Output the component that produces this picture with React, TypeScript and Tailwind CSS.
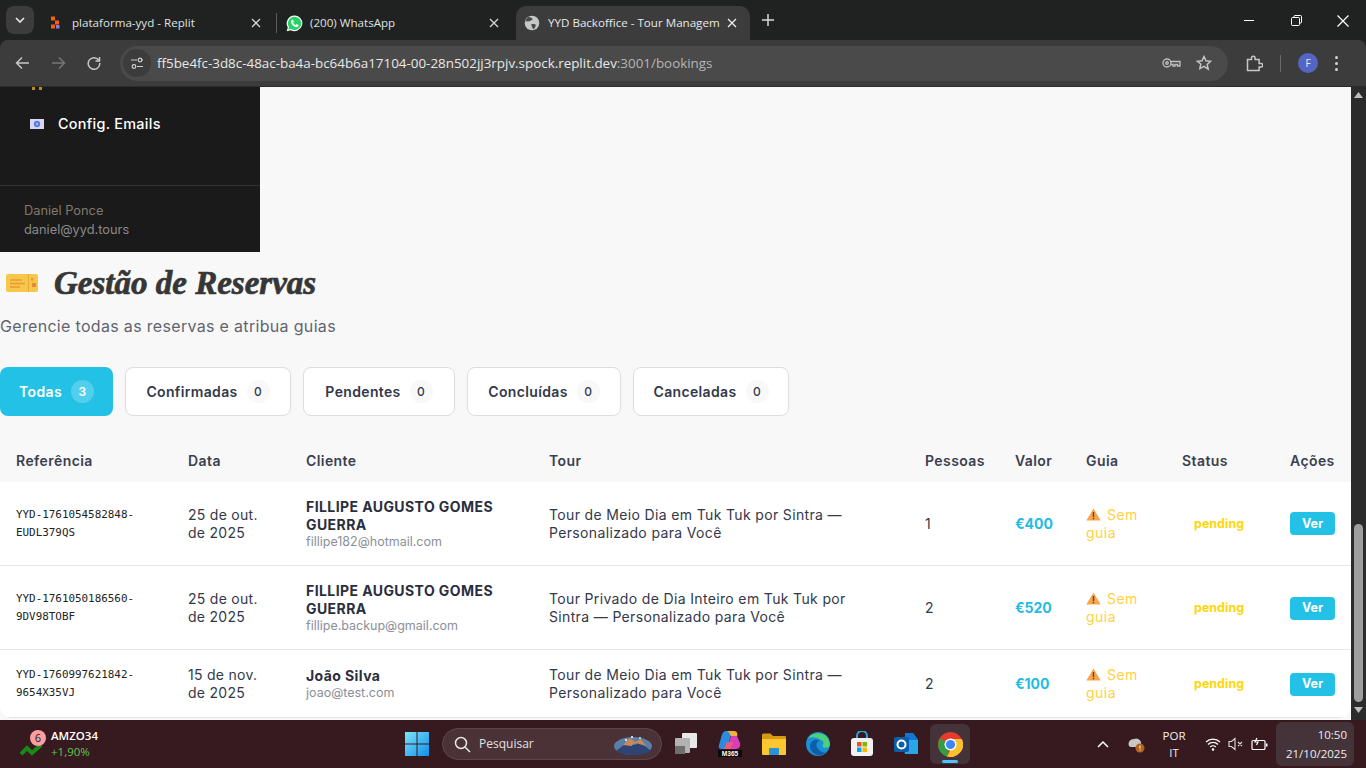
import React from "react";

const ui = "font-['Open_Sans','Noto_Sans',sans-serif]";
const mont = "font-['Inter','Noto_Sans',sans-serif]";

function Close({ c = "#d5d5d5" }: { c?: string }) {
  return (
    <svg width="10" height="10" viewBox="0 0 10 10" fill="none" stroke={c} strokeWidth="1.3"><path d="M1 1l8 8M9 1l-8 8" /></svg>
  );
}

function ReplitIcon() {
  return (
    <svg width="12" height="14" viewBox="0 0 12 14">
      <rect x="1" y="0.5" width="4" height="4" fill="#f26207" />
      <rect x="5" y="4.5" width="4" height="4" fill="#f26207" />
      <rect x="1" y="8.5" width="4" height="4" fill="#f26207" />
      <rect x="6" y="9" width="3.5" height="3.5" fill="#8b7cf6" />
    </svg>
  );
}

function WhatsIcon() {
  return (
    <svg width="17" height="17" viewBox="0 0 17 17">
      <path d="M8.5.6a7.8 7.8 0 0 0-6.7 11.8L.7 16.3l4-1.1A7.8 7.8 0 1 0 8.500.6z" fill="#fff" />
      <path d="M8.500 1.800a6.600 6.600 0 0 0-5.500 10.200l-.7 2.600 2.700-.7a6.600 6.600 0 1 0 3.500-12.100z" fill="#25d366" />
      <path d="M6.300 4.800c-.5 0-1.300.8-1.300 2 0 2.400 3 5.400 5.500 5.400 1.200 0 2-.9 2-1.500v-.8l-1.900-.9-.8 1c-1-.3-2.300-1.500-2.700-2.600l.8-.8-.8-1.800z" fill="#fff" />
    </svg>
  );
}

function Globe() {
  return (
    <svg width="16" height="16" viewBox="0 0 16 16">
      <circle cx="8" cy="8" r="7.300" fill="#c4c7c5" />
      <path d="M5 1.800c1 1 3 .8 3.500 2 .4 1-1.300 1.300-2.200 2.200-.7.700-2.500-.3-4.800.700C2 4 3 2.700 5 1.800zM8 9c1.500-.3 3.500 0 3.800 1 .3 1.200-1.300 3.700-2.500 4-1 .2-.8-1.800-1.500-2.800C7.200 10.300 7 9.300 8 9z" fill="#47494b" />
    </svg>
  );
}

function TabStrip() {
  return (
    <div className={`h-[40px] bg-[#202221] flex items-start ${ui} text-[11.6px] text-[#dfe1e0] relative`}>
      <div className="ml-[6px] mt-[6px] w-[28px] h-[28px] rounded-[8px] bg-[#3c3c3c] flex items-center justify-center">
        <svg width="10" height="6" viewBox="0 0 10 6" fill="none" stroke="#e3e3e3" strokeWidth="1.700"><path d="M1 1l4 4 4-4" /></svg>
      </div>
      <div className="ml-[12px] w-[230px] h-[34px] mt-[6px] flex items-center pl-[2px] pr-[15px]">
        <div className="w-[16px] flex justify-center"><ReplitIcon /></div>
        <span className="ml-[8px] flex-1 whitespace-nowrap">plataforma-yyd - Replit</span>
        <Close />
      </div>
      <div className="w-px h-[20px] bg-[#5a5a5a] mt-[13px]" />
      <div className="w-[239px] h-[34px] mt-[6px] flex items-center pl-[9px] pr-[17px]">
        <WhatsIcon />
        <span className="ml-[7px] flex-1 whitespace-nowrap">(200) WhatsApp</span>
        <Close />
      </div>
      <div className="w-[234px] h-[34px] mt-[6px] rounded-t-[10px] bg-[#3c3c3c] flex items-center pl-[8px] pr-[13px] text-[#e8e8e8]">
        <Globe />
        <span className="ml-[8px] flex-1 whitespace-nowrap">YYD Backoffice - Tour Managem</span>
        <Close c="#eee" />
      </div>
      <div className="ml-[12px] mt-[14px]">
        <svg width="12" height="12" viewBox="0 0 12 12" stroke="#d8d8d8" strokeWidth="1.500"><path d="M6 0v12M0 6h12" /></svg>
      </div>
      <div className="ml-auto flex items-start mr-[17px] mt-[15px]">
        <svg width="10" height="10" viewBox="0 0 10 10" stroke="#fff"><path d="M0 5.500h10" /></svg>
        <svg className="ml-[37px]" width="11" height="11" viewBox="0 0 11 11" fill="none" stroke="#fff"><rect x=".5" y="2.500" width="8" height="8" rx="1" /><path d="M3 2.500V1.500a1 1 0 0 1 1-1h5.500a1 1 0 0 1 1 1V7a1 1 0 0 1-1 1H8.500" /></svg>
        <svg className="ml-[35px]" width="12" height="12" viewBox="0 0 12 12" stroke="#fff" strokeWidth="1.200"><path d="M.5.500l11 11M11.500.500l-11 11" /></svg>
      </div>
    </div>
  );
}

function Toolbar() {
  return (
    <div className="h-[47px] bg-[#202221]">
      <div className="h-[46px] bg-[#3c3c3c] rounded-t-[8px] flex items-center border-b border-[#2c2c2c] box-content">
        <div className="ml-[15px] w-[15px]">
          <svg width="15" height="14" viewBox="0 0 15 14" fill="none" stroke="#c7c7c7" strokeWidth="1.500"><path d="M14 7H2M7 1.500L1.500 7 7 12.500" /></svg>
        </div>
        <div className="ml-[21px] w-[15px]">
          <svg width="15" height="14" viewBox="0 0 15 14" fill="none" stroke="#777" strokeWidth="1.500"><path d="M1 7h12M8 1.500L13.500 7 8 12.500" /></svg>
        </div>
        <div className="ml-[21px] w-[14px]">
          <svg width="14" height="14" viewBox="0 0 14 14" fill="none" stroke="#c7c7c7" strokeWidth="1.500"><path d="M12 4.500A5.800 5.800 0 1 0 12.800 7" /><path d="M12.500 1v4h-4" /></svg>
        </div>
        <div className="ml-[19px] w-[1108px] h-[35px] rounded-full bg-[#4a4a4a] flex items-center pl-[3px] pr-[16px]">
          <div className="w-[28px] h-[28px] rounded-full bg-[#3c3c3c] flex items-center justify-center">
            <svg width="14" height="14" viewBox="0 0 14 14" fill="none" stroke="#d0d0d0" strokeWidth="1.200"><path d="M1 4h6M7 10.500h6" /><circle cx="10" cy="4" r="1.800" /><circle cx="4" cy="10.500" r="1.800" /><path d="M12 4h1" /></svg>
          </div>
          <span className={`ml-[6px] ${ui} text-[13.4px] text-[#e8e8e8] whitespace-nowrap flex-1`}>
            ff5be4fc-3d8c-48ac-ba4a-bc64b6a17104-00-28n502jj3rpjv.spock.replit.dev<span className="text-[#b5b5b5]">:3001/bookings</span>
          </span>
          <svg width="19" height="12" viewBox="0 0 19 12" fill="none" stroke="#bdbdbd" strokeWidth="1.400"><circle cx="5" cy="6" r="4" /><circle cx="5" cy="6" r="1.200" /><path d="M9 4.500h9V9h-2.500V7.500H13V9h-2V7.500H9" /></svg>
          <svg className="ml-[15px]" width="16" height="16" viewBox="0 0 16 16" fill="none" stroke="#c7c7c7" strokeWidth="1.400"><path d="M8 1.500l2 4.300 4.700.5-3.500 3.200 1 4.700L8 11.300l-4.200 2.400 1-4.700L1.300 6.300 6 5.800z" /></svg>
        </div>
        <svg className="ml-[18px]" width="17" height="17" viewBox="0 0 17 17" fill="none" stroke="#c7c7c7" strokeWidth="1.500"><path d="M1.500 4.500h4V3a1.800 1.800 0 0 1 3.600 0v1.500h4v4H15a1.800 1.800 0 0 1 0 3.600h-1.900v3.400H1.500z" /></svg>
        <div className="ml-[17px] w-px h-[17px] bg-[#6a6a6a]" />
        <div className={`ml-[17px] w-[20px] h-[20px] rounded-full bg-[#5565c5] flex items-center justify-center text-[10px] text-[#e8ecff] ${ui}`}>F</div>
        <div className="ml-[17px] flex flex-col gap-[3px]">
          <div className="w-[3px] h-[3px] rounded-full bg-[#d5d5d5]" />
          <div className="w-[3px] h-[3px] rounded-full bg-[#d5d5d5]" />
          <div className="w-[3px] h-[3px] rounded-full bg-[#d5d5d5]" />
        </div>
      </div>
    </div>
  );
}

function Sidebar() {
  return (
    <aside className={`w-[260px] h-[165px] bg-[#1a1a1a] flex flex-col ${mont} shrink-0`}>
      <div className="h-[98px] relative">
        <div className="absolute left-[32px] top-0 w-[10px] h-[3px] flex justify-between">
          <span className="w-[3px] h-[3px] bg-[#c08a1e]" />
          <span className="w-[3px] h-[3px] bg-[#c08a1e]" />
        </div>
        <div className="pl-[30px] pt-[28px] flex items-center">
          <svg width="14" height="10" viewBox="0 0 14 10"><rect width="14" height="10" fill="#d8d8f4" /><circle cx="7" cy="5" r="3.200" fill="#5b7fd8" /><circle cx="7" cy="5" r="1.200" fill="#9db4ee" /></svg>
          <span className="ml-[14px] text-[14.4px] text-white font-medium leading-[18px] tracking-[0.02em]">Config. Emails</span>
        </div>
      </div>
      <div className="border-t border-[#333333] pl-[24px] pt-[15px] text-[12.8px] text-[#8a8a8a] leading-[19px]">
        <div className="text-[#80796c]">Daniel Ponce</div>
        <div>daniel@yyd.tours</div>
      </div>
    </aside>
  );
}

const tabs = [
  { label: "Todas", n: 3, w: "w-[113px]", active: true },
  { label: "Confirmadas", n: 0, w: "w-[166px]", active: false },
  { label: "Pendentes", n: 0, w: "w-[152px]", active: false },
  { label: "Concluídas", n: 0, w: "w-[154px]", active: false },
  { label: "Canceladas", n: 0, w: "w-[156px]", active: false },
];

function Tabs() {
  return (
    <div className="mt-[31px] flex gap-[12px]">
      {tabs.map((t) => (
        <div
          key={t.label}
          className={`${t.w} h-[49px] rounded-[8px] flex items-center justify-center gap-[9px] text-[14px] font-semibold tracking-[0.025em] ${
            t.active ? "bg-[#23c1e6] text-white" : "bg-white border border-[#dcdce2] text-[#33384a]"
          }`}
        >
          <span>{t.label}</span>
          <span
            className={`w-[23px] h-[23px] rounded-full flex items-center justify-center text-[12px] ${
              t.active ? "bg-[#52cfec] text-white" : "bg-[#f8f8f8] text-[#33384a] font-medium"
            }`}
          >
            {t.n}
          </span>
        </div>
      ))}
    </div>
  );
}

function Warn() {
  return (
    <svg className="inline-block align-[-1px] mr-[6px]" width="15" height="13" viewBox="0 0 15 13">
      <path d="M7.500.5L14.700 12.500H.3z" fill="#f9a64a" />
      <rect x="6.800" y="4" width="1.400" height="5" fill="#5a4630" />
      <rect x="6.800" y="9.800" width="1.400" height="1.500" fill="#5a4630" />
    </svg>
  );
}

const rows = [
  { ref1: "YYD-1761054582848-", ref2: "EUDL379QS", d1: "25 de out.", d2: "de 2025", name: ["FILLIPE AUGUSTO GOMES", "GUERRA"], email: "fillipe182@hotmail.com", t1: "Tour de Meio Dia em Tuk Tuk por Sintra —", t2: "Personalizado para Você", p: 1, v: "€400", h: "h-[83px]", pt: "pt-[1px]" },
  { ref1: "YYD-1761050186560-", ref2: "9DV98TOBF", d1: "25 de out.", d2: "de 2025", name: ["FILLIPE AUGUSTO GOMES", "GUERRA"], email: "fillipe.backup@gmail.com", t1: "Tour Privado de Dia Inteiro em Tuk Tuk por", t2: "Sintra — Personalizado para Você", p: 2, v: "€520", h: "h-[84px]", pt: "pt-[2px]" },
  { ref1: "YYD-1760997621842-", ref2: "9654X35VJ", d1: "15 de nov.", d2: "de 2025", name: ["João Silva"], email: "joao@test.com", t1: "Tour de Meio Dia em Tuk Tuk por Sintra —", t2: "Personalizado para Você", p: 2, v: "€100", h: "h-[68px]", pt: "pt-[2px]" },
];

const th = "text-left font-semibold text-[14px] text-[#3a3f50] pl-[16px] pr-0 tracking-[0.03em]";
const td = "pl-[16px] pr-0 align-middle leading-[18px]";

function BookingsTable() {
  return (
    <div className="mt-[23px] rounded-b-[12px] overflow-hidden">
      <table className="w-[1351px] table-fixed border-collapse">
        <colgroup>
          <col className="w-[172px]" />
          <col className="w-[118px]" />
          <col className="w-[243px]" />
          <col className="w-[376px]" />
          <col className="w-[90px]" />
          <col className="w-[71px]" />
          <col className="w-[96px]" />
          <col className="w-[108px]" />
          <col className="w-[77px]" />
        </colgroup>
        <thead>
          <tr className="h-[43px]">
            {["Referência", "Data", "Cliente", "Tour", "Pessoas", "Valor", "Guia", "Status", "Ações"].map((h) => (
              <th key={h} className={th}>{h}</th>
            ))}
          </tr>
        </thead>
        <tbody className="bg-white">
          {rows.map((r) => (
            <tr key={r.ref1} className={`${r.h} border-b border-[#e6e6e6]`}>
              <td className={`${td} ${r.pt} font-['DejaVu_Sans_Mono','Liberation_Mono',monospace] text-[10.9px] text-[#222]`}>
                <div>{r.ref1}</div>
                <div>{r.ref2}</div>
              </td>
              <td className={`${td} ${r.pt} text-[14px] text-[#33384a] tracking-[0.02em]`}>
                <div>{r.d1}</div>
                <div>{r.d2}</div>
              </td>
              <td className={`${td} ${r.pt}`}>
                {r.name.map((n) => (
                  <div key={n} className="font-bold text-[14px] text-[#2a2e3d] tracking-[0.03em] whitespace-nowrap">{n}</div>
                ))}
                <div className="text-[12.5px] text-[#8b8f99] leading-[16px]">{r.email}</div>
              </td>
              <td className={`${td} ${r.pt} text-[14px] text-[#33384a] tracking-[0.025em] whitespace-nowrap`}>
                <div>{r.t1}</div>
                <div>{r.t2}</div>
              </td>
              <td className={`${td} ${r.pt} text-[14px] text-[#33384a]`}>{r.p}</td>
              <td className={`${td} ${r.pt} font-bold text-[#23bce3] text-[14px]`}>{r.v}</td>
              <td className={`${td} ${r.pt} text-[14px] text-[#ffd23f] tracking-[0.035em]`}>
                <div className="whitespace-nowrap"><Warn />Sem</div>
                <div>guia</div>
              </td>
              <td className={`${td} ${r.pt}`}>
                <div className="ml-[12px] text-[12.5px] font-bold text-[#ffd60a]">pending</div>
              </td>
              <td className={`${td} ${r.pt}`}>
                <div className="w-[45px] h-[23px] rounded-[4px] bg-[#23c1e6] flex items-center justify-center text-[12.5px] font-bold text-white">Ver</div>
              </td>
            </tr>
          ))}
        </tbody>
      </table>
    </div>
  );
}

function Scrollbar() {
  return (
    <div className="w-[15px] h-full bg-[#2b2b2b] shrink-0 flex flex-col items-center relative">
      <svg className="mt-[5px]" width="9" height="6" viewBox="0 0 9 6" fill="#bdbdbd"><path d="M4.500 0L9 6H0z" /></svg>
      <div className="mt-[426px] w-[9px] h-[178px] rounded-full bg-[#9e9e9e]" />
      <svg className="mt-[5px]" width="9" height="6" viewBox="0 0 9 6" fill="#bdbdbd"><path d="M4.500 6L9 0H0z" /></svg>
    </div>
  );
}

function Pin({ children }: { children: React.ReactNode }) {
  return <div className="w-[44px] flex items-center justify-center">{children}</div>;
}

function Taskbar() {
  return (
    <div className={`h-[48px] bg-[#361a20] flex items-center ${ui} text-white relative shrink-0`}>
      <div className="w-[405px] flex items-center pl-[20px]">
        <div className="relative w-[26px] h-[28px]">
          <svg className="absolute left-0 top-[12px]" width="24" height="15" viewBox="0 0 24 15" fill="none" stroke="#178a17" strokeWidth="4"><path d="M1 12l6-6 5 5 9-8" /></svg>
          <div className="absolute left-[10px] top-0 w-[16px] h-[16px] rounded-full bg-[#ff9ea0] text-[#222] text-[11px] flex items-center justify-center">6</div>
        </div>
        <div className="ml-[5px] leading-[16px]">
          <div className="text-[11.5px] font-semibold">AMZO34</div>
          <div className="text-[11.5px] text-[#5fc44f]">+1,90%</div>
        </div>
      </div>
      <svg width="24" height="24" viewBox="0 0 24 24">
        <defs><linearGradient id="win" x1="0" y1="0" x2="1" y2="1"><stop offset="0" stopColor="#7de3fb" /><stop offset="1" stopColor="#0f8fe8" /></linearGradient></defs>
        <path d="M0 0h11.500v11.500H0zM12.500 0H24v11.500H12.500zM0 12.500h11.500V24H0zM12.500 12.500H24V24H12.500z" fill="url(#win)" />
      </svg>
      <div className="ml-[13px] w-[220px] h-[32px] rounded-full bg-[#4a3236] border border-[#5c484b] flex items-center pl-[11px] pr-[8px]">
        <svg width="17" height="17" viewBox="0 0 17 17" fill="none" stroke="#e6e6e6" strokeWidth="1.500"><circle cx="7" cy="7" r="5.500" /><path d="M11 11l5 5" /></svg>
        <span className="ml-[8px] text-[12px] text-[#e4e0e0] flex-1">Pesquisar</span>
        <svg width="40" height="22" viewBox="0 0 40 22">
          <ellipse cx="20" cy="13" rx="19" ry="9" fill="#5c7fa8" />
          <path d="M3 18l13-10 6 4 5-3 11 9a20 8 0 0 1-35 0z" fill="#2e4474" />
          <path d="M10 12l7-7 5 4 6-3 5 7-10-3-5 3z" fill="#c98a5a" />
          <circle cx="19" cy="4" r="1" fill="#fff" /><circle cx="27" cy="5" r="1" fill="#9fe" /><circle cx="13" cy="7" r="1" fill="#fff" />
        </svg>
      </div>
      {/* pinned */}
      <div className="ml-[2px] flex items-center">
        <Pin>
          <svg width="24" height="24" viewBox="0 0 24 24">
            <rect x="8" y="1" width="15" height="15" rx="1" fill="#e8e8e8" />
            <rect x="1" y="6" width="15" height="15" rx="1" fill="#b3b3b3" />
            <rect x="1" y="14" width="10" height="8" fill="#6e6e6e" />
          </svg>
        </Pin>
        <Pin>
          <svg width="24" height="28" viewBox="0 0 24 28">
            <path d="M8 1C5 1 4 4 3 8L1 15c-1 3 1 4 3 4h5l4-14c.5-2 1-4-5-4z" fill="#2b8be0" />
            <path d="M8 1h8c3 0 4 3 3 5l-6 0c-2-4-3-5-5-5z" fill="#f4b03f" />
            <path d="M13 6l6 0 3 7c1 3-1 6-4 6h-9z" fill="#d83fb6" />
            <path d="M9 12h6l-2 7H6z" fill="#f05a7a" />
            <rect x="0" y="20" width="24" height="7" fill="#0a0a0a" />
            <text x="12" y="26" textAnchor="middle" fontSize="6.500" fill="#fff" fontFamily="Liberation Sans" fontWeight="700">M365</text>
          </svg>
        </Pin>
        <Pin>
          <svg width="26" height="24" viewBox="0 0 26 24">
            <path d="M1 3a1.500 1.500 0 0 1 1.500-1.500h7L12 4h12a1 1 0 0 1 1 1v3H1z" fill="#d99a13" />
            <path d="M1 7h24v15a1 1 0 0 1-1 1H2a1 1 0 0 1-1-1z" fill="#fbc630" />
            <rect x="8" y="16" width="10" height="7" rx="1" fill="#2b91d8" />
          </svg>
        </Pin>
        <Pin>
          <svg width="24" height="26" viewBox="0 0 24 26">
            <circle cx="12" cy="13" r="12" fill="#1a8fd6" />
            <path d="M2 8C5 0 22-1 24 13c.2 3-3 4.500-6 3.500-4-1.500 2-4-2-7C11 6 4 5 2 8z" fill="#4dd07a" />
            <path d="M4 15c0-5 6-8 10-5-5 0-5 8 2 11 1.500.6 3 .6 4 .3C13 28 4 22 4 15z" fill="#0f5da8" />
          </svg>
        </Pin>
        <Pin>
          <svg width="26" height="26" viewBox="0 0 26 26">
            <path d="M8 8V5a5 5 0 0 1 10 0v3" fill="none" stroke="#27a8e0" strokeWidth="2" />
            <rect x="2" y="7" width="22" height="18" rx="3" fill="#f2f2f2" />
            <rect x="8" y="11" width="4.500" height="4.500" fill="#f25022" />
            <rect x="13.500" y="11" width="4.500" height="4.500" fill="#7fba00" />
            <rect x="8" y="16.500" width="4.500" height="4.500" fill="#00a4ef" />
            <rect x="13.500" y="16.500" width="4.500" height="4.500" fill="#ffb900" />
          </svg>
        </Pin>
        <Pin>
          <svg width="26" height="26" viewBox="0 0 26 26">
            <path d="M9 7l11-5 5 7v14H12z" fill="#28a8ea" />
            <path d="M12 2h8l5 7H12z" fill="#0f78d4" />
            <rect x="1" y="6" width="15" height="15" rx="2" fill="#0a5ea8" />
            <circle cx="8.500" cy="13.500" r="4" fill="none" stroke="#fff" strokeWidth="2" />
          </svg>
        </Pin>
        <Pin>
          <div className="w-[40px] h-[40px] rounded-[6px] bg-[#45333a] flex flex-col items-center justify-center relative">
            <svg width="25" height="25" viewBox="0 0 25 25">
              <circle cx="12.500" cy="12.500" r="12.500" fill="#e53b2f" />
              <path d="M12.500 12.500L1.800 6.500A12.500 12.500 0 0 0 9 24.500z" fill="#2f9e44" />
              <path d="M12.500 7h11.300A12.500 12.500 0 0 1 9 24.500L14 15z" fill="#fbc02d" />
              <circle cx="12.500" cy="12.500" r="6" fill="#fff" />
              <circle cx="12.500" cy="12.500" r="4.600" fill="#3f86f4" />
            </svg>
            <div className="absolute bottom-[1px] w-[16px] h-[3px] rounded-full bg-[#4cc2ff]" />
          </div>
        </Pin>
      </div>
      {/* tray */}
      <div className="ml-auto flex items-center">
        <svg width="12" height="8" viewBox="0 0 12 8" fill="none" stroke="#fff" strokeWidth="1.500"><path d="M1 7l5-5 5 5" /></svg>
        <svg className="ml-[19px]" width="18" height="18" viewBox="0 0 18 18">
          <path d="M1 11a5 5 0 0 1 5-7 5 5 0 0 1 7 3v5H4a3 3 0 0 1-3-1z" fill="#c8c8c8" />
          <circle cx="12" cy="13" r="4.500" fill="#b0631a" />
          <rect x="11.500" y="10.500" width="1" height="3" fill="#fff" /><rect x="11.500" y="14.500" width="1" height="1" fill="#fff" />
        </svg>
        <div className="ml-[15px] w-[26px] text-center text-[11.5px] leading-[17px] text-[#eee]">POR<br />IT</div>
        <svg className="ml-[18px]" width="16" height="14" viewBox="0 0 16 14" fill="none" stroke="#fff" strokeWidth="1.200"><path d="M1 5a10 10 0 0 1 14 0M3 7.500a7 7 0 0 1 10 0M5.200 10a4 4 0 0 1 5.600 0" /><circle cx="8" cy="12.500" r=".7" fill="#fff" /></svg>
        <svg className="ml-[7px]" width="16" height="14" viewBox="0 0 16 14" fill="none" stroke="#ddd" strokeWidth="1.100"><path d="M1 4.500h2.500L7 1.500v11L3.500 9.500H1zM10 5l4 4M14 5l-4 4" /></svg>
        <svg className="ml-[7px]" width="17" height="14" viewBox="0 0 17 14" fill="none" stroke="#fff" strokeWidth="1.200"><rect x="1" y="3.500" width="13" height="9" rx="1" /><rect x="15" y="6.500" width="1.500" height="3" fill="#fff" stroke="none" /><path d="M6 1L4 5h3L5.500 8" /></svg>
        <div className="ml-[8px] mr-[12px] w-[78px] h-[44px] rounded-[6px] bg-[#45333a] flex flex-col justify-center items-end pr-[7px] text-[11.5px] leading-[19px] text-[#eee]">
          <div>10:50</div>
          <div>21/10/2025</div>
        </div>
      </div>
    </div>
  );
}

export default function App() {
  return (
    <div className="w-[1366px] h-[768px] overflow-hidden flex flex-col bg-[#f8f8f8]">
      <TabStrip />
      <Toolbar />
      <div className="h-[633px] flex overflow-hidden shrink-0">
        <main className={`flex-1 min-w-0 ${mont} bg-[#f8f8f8]`}>
          <Sidebar />
          <div className="h-[60px] flex items-end pl-[6px]">
            <svg className="mb-[20px]" width="32" height="18" viewBox="0 0 32 18">
              <rect width="32" height="18" rx="2" fill="#f7c64a" />
              <rect x="22" width="1" height="18" fill="#eaa93a" />
              <path d="M4 6h12M4 9.500h15M4 13h10" stroke="#e79a35" strokeWidth="1.500" />
              <rect x="25" y="4" width="2.500" height="2.500" fill="#e79a35" />
              <rect x="26" y="9" width="4" height="4" fill="#e78a35" />
            </svg>
            <h1 className="ml-[16px] mb-[5px] text-[33px] leading-[48px] font-bold italic text-[#363636] font-['Liberation_Serif',serif] whitespace-nowrap [-webkit-text-stroke:0.7px_#363636]">Gestão de Reservas</h1>
          </div>
          <p className="mt-[5px] text-[16px] leading-[19px] text-[#5f6470] tracking-[0.02em]">Gerencie todas as reservas e atribua guias</p>
          <Tabs />
          <BookingsTable />
        </main>
        <Scrollbar />
      </div>
      <Taskbar />
    </div>
  );
}
